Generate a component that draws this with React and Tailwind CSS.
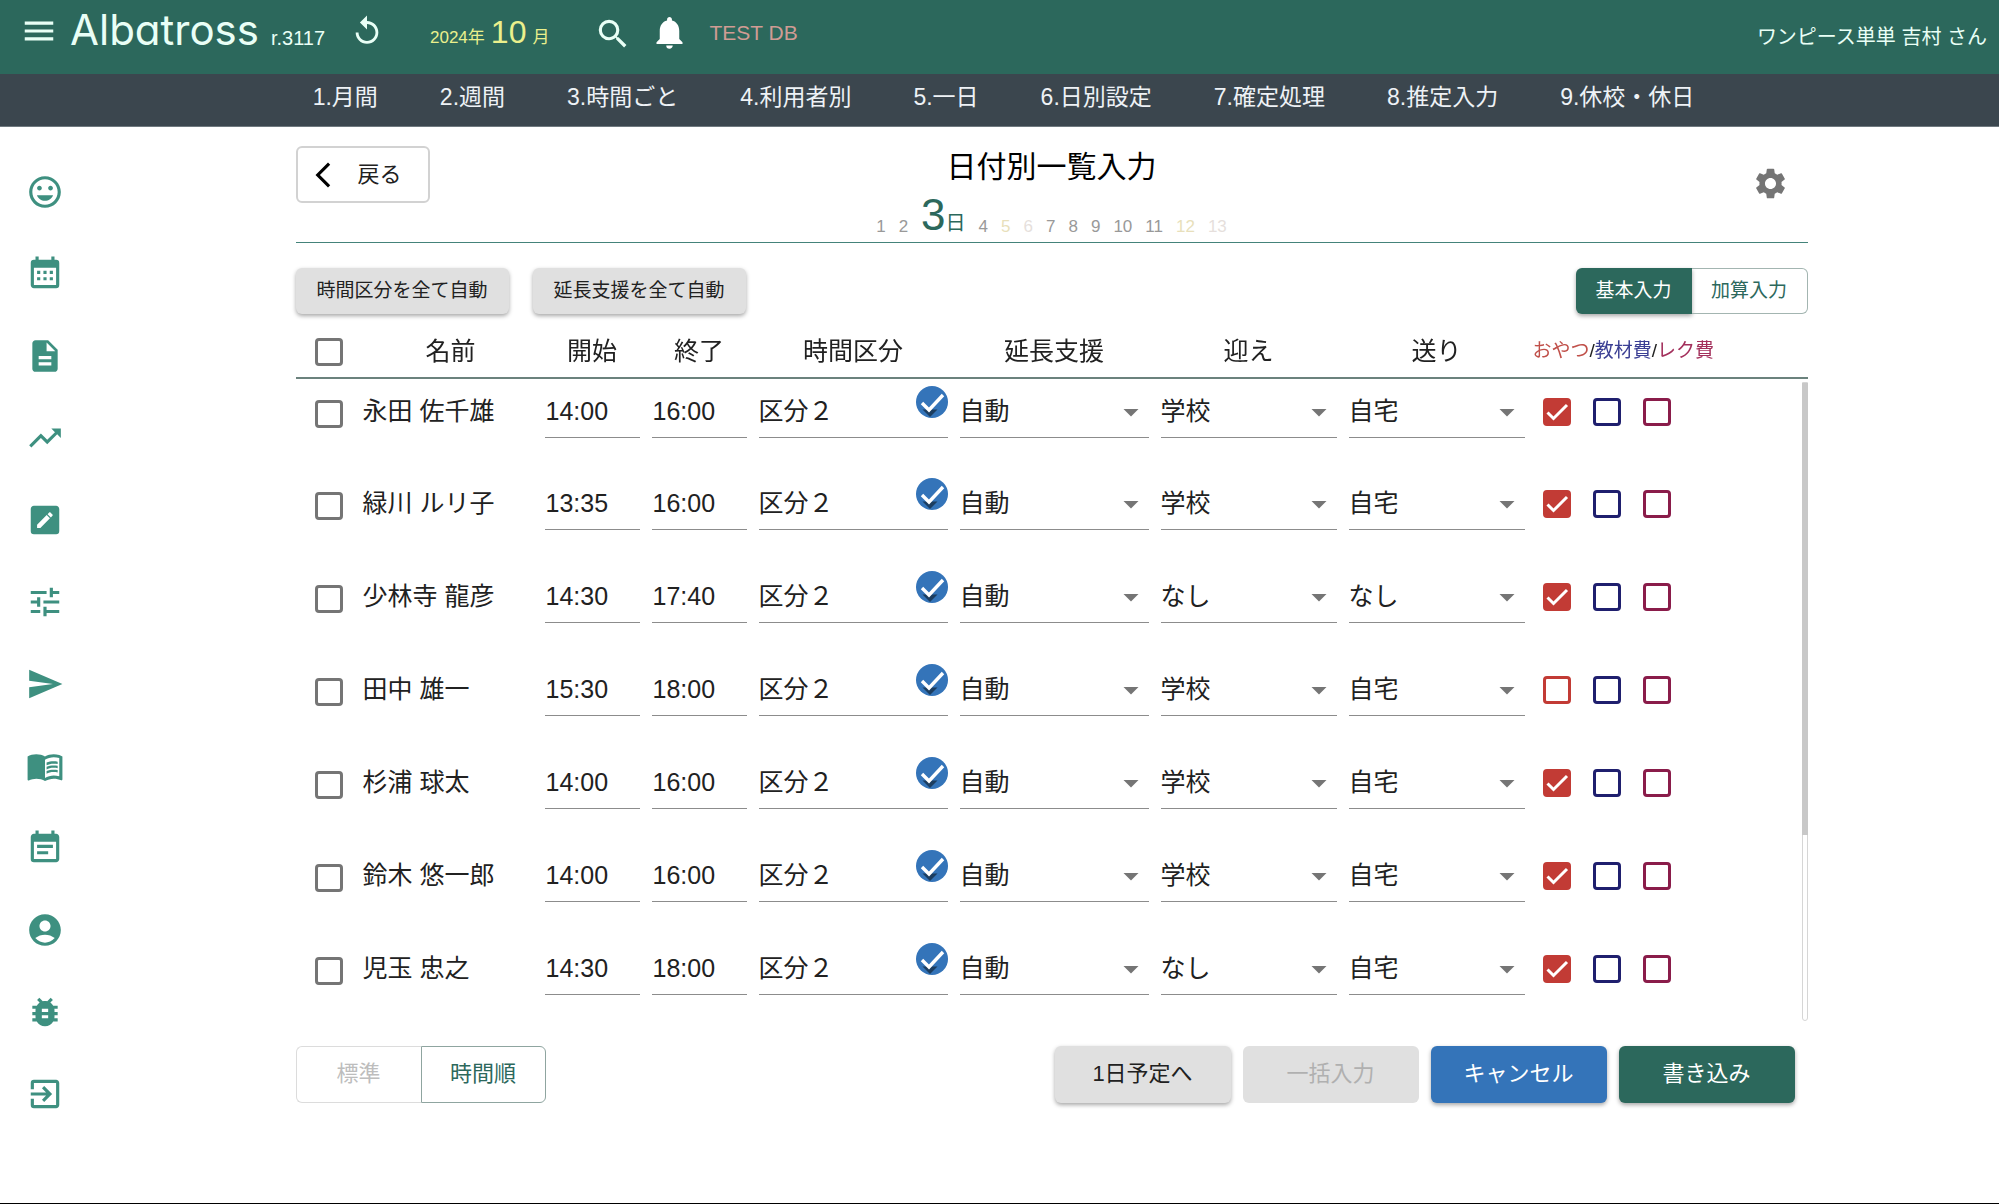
import { useState } from "react";
import {
  MdMenu, MdReplay, MdSearch, MdNotifications, MdMood, MdDescription, MdTrendingUp, MdTune, MdSend,
  MdMenuBook, MdEventNote, MdAccountCircle, MdBugReport, MdExitToApp, MdSettings, MdArrowBackIosNew,
  MdArrowDropDown,
} from "react-icons/md";

const CalendarMonth = ({ size }) => (
  <svg width={size} height={size} viewBox="0 0 24 24" fill="currentColor">
    <path d="M9 10v2H7v-2h2m4 0v2h-2v-2h2m4 0v2h-2v-2h2m2-7a2 2 0 0 1 2 2v14a2 2 0 0 1-2 2H5c-1.11 0-2-.9-2-2V5a2 2 0 0 1 2-2h1V1h2v2h8V1h2v2h1m0 16V8H5v11h14M9 14v2H7v-2h2m4 0v2h-2v-2h2m4 0v2h-2v-2h2z" />
  </svg>
);

const PencilBox = ({ size }) => (
  <svg width={size} height={size} viewBox="0 0 24 24" fill="currentColor">
    <path d="M19 3H5c-1.11 0-2 .89-2 2v14a2 2 0 0 0 2 2h14a2 2 0 0 0 2-2V5c0-1.11-.9-2-2-2m-2.3 6.35-1 1-2.05-2.05 1-1c.21-.22.56-.22.77 0l1.28 1.28c.22.21.22.56 0 .77M7 14.94l6.06-6.06 2.06 2.06L9.06 17H7v-2.06z" />
  </svg>
);

const menus = ["1.月間", "2.週間", "3.時間ごと", "4.利用者別", "5.一日", "6.日別設定", "7.確定処理", "8.推定入力", "9.休校・休日"];

const sideLinks = [
  ["利用者", MdMood],
  ["カレンダー", CalendarMonth],
  ["帳票", MdDescription],
  ["推移", MdTrendingUp],
  ["編集", PencilBox],
  ["設定", MdTune],
  ["送信", MdSend],
  ["マニュアル", MdMenuBook],
  ["予定", MdEventNote],
  ["アカウント", MdAccountCircle],
  ["不具合報告", MdBugReport],
  ["ログアウト", MdExitToApp],
];

const rows = [
  { name: "永田 佐千雄", start: "14:00", end: "16:00", pickup: "学校", dropoff: "自宅", snack: true },
  { name: "緑川 ルリ子", start: "13:35", end: "16:00", pickup: "学校", dropoff: "自宅", snack: true },
  { name: "少林寺 龍彦", start: "14:30", end: "17:40", pickup: "なし", dropoff: "なし", snack: true },
  { name: "田中 雄一", start: "15:30", end: "18:00", pickup: "学校", dropoff: "自宅", snack: false },
  { name: "杉浦 球太", start: "14:00", end: "16:00", pickup: "学校", dropoff: "自宅", snack: true },
  { name: "鈴木 悠一郎", start: "14:00", end: "16:00", pickup: "学校", dropoff: "自宅", snack: true },
  { name: "児玉 忠之", start: "14:30", end: "18:00", pickup: "なし", dropoff: "自宅", snack: true },
];

const days = [1, 2, 3, 4, 5, 6, 7, 8, 9, 10, 11, 12, 13];

function dayColor(d) {
  if (d % 7 === 5) return "text-[#e8dfbb]";
  if (d % 7 === 6) return "text-[#e6dfdc]";
  return "text-[#999999]";
}

function Check({ label, color, checked = false }) {
  return (
    <span className="relative block size-7">
      <input type="checkbox" aria-label={label} defaultChecked={checked}
        className={"peer block size-7 appearance-none rounded-[4px] border-3 checked:bg-current " + color} />
      <svg viewBox="0 0 28 28" className="pointer-events-none absolute inset-0 hidden peer-checked:block" fill="none" stroke="#fff" strokeWidth="3">
        <path d="M4.5 14.5 10.5 20.5 24 7" />
      </svg>
    </span>
  );
}

function TimeInput({ label, value }) {
  const [time, setTime] = useState(value);
  return (
    <input type="text" aria-label={label} value={time} onChange={e => setTime(e.target.value)}
      className="block h-[52px] w-full border-b border-[#8c8c8c] pl-px" />
  );
}

function Select({ label, value, options, done }) {
  return (
    <div className="relative">
      <select aria-label={label} defaultValue={value} className="block h-[52px] w-full appearance-none border-b border-[#8c8c8c]">
        {options.map(o => <option key={o}>{o}</option>)}
      </select>
      <MdArrowDropDown size={36} className="pointer-events-none absolute top-2 right-0 text-[#757575]" />
      {done && (
        <svg viewBox="0 0 32 32" className="pointer-events-none absolute top-0 right-0 size-8">
          <circle cx="16" cy="16" r="16" fill="#3474b9" />
          <path d="M6.5 23.5h15L14 31z" fill="#1b3d60" />
          <path d="M6 17 13 24 27 9" fill="none" stroke="#fff" strokeWidth="3.4" />
        </svg>
      )}
    </div>
  );
}

export default function App() {
  return (
    <div className="flex min-h-screen flex-col border-b border-black bg-white font-['Liberation_Sans','Noto_Sans_CJK_JP',sans-serif] text-[25px] text-[#212121]">
      <header className="flex h-[74px] items-start bg-[#2c685c] pl-5 pr-3 text-[#e9fff6]">
        <button aria-label="メニュー" className="mt-3"><MdMenu size={38} /></button>
        <div className="ml-3 flex w-[280px] items-baseline gap-3">
          <span className="font-[Inter] text-[42px] leading-[60px] [font-feature-settings:'cv11']">Albatross</span>
          <span className="text-[20px]">r.3117</span>
        </div>
        <button aria-label="再読み込み" className="mt-[14px]"><MdReplay size={34} /></button>
        <div className="ml-[46px] flex items-baseline gap-[6px] text-[17px] text-[#eaf08c]">
          <span>2024年</span>
          <span className="text-[32px] leading-[64px]">10</span>
          <span>月</span>
        </div>
        <button aria-label="検索" className="ml-[45px] mt-[15px]"><MdSearch size={38} /></button>
        <button aria-label="お知らせ" className="ml-[18px] mt-[13px] text-white"><MdNotifications size={39} /></button>
        <span className="ml-5 text-[21px] leading-[66px] text-[#d09c94]">TEST DB</span>
        <span className="ml-auto text-[20px] leading-[74px]">ワンピース単単 吉村 さん</span>
      </header>

      <nav className="flex h-[53px] items-center justify-center gap-[62px] border-b border-[#6f797f] bg-[#3b464e] pb-[6px] pl-2 text-[23px] leading-8 text-[#eef2f6]">
        {menus.map(m => <a key={m} href="#">{m}</a>)}
      </nav>

      <div className="flex flex-1">
        <aside className="flex w-[104px] flex-col gap-11 pl-[26px] pt-[46px] text-[#3e9080]">
          {sideLinks.map(([label, Icon]) => (
            <a key={label} href="#" aria-label={label} className="h-[38px]"><Icon size={38} /></a>
          ))}
        </aside>

        <main className="min-w-0 flex-1">
          <div className="mx-auto w-full max-w-[1512px]">
            <div className="grid h-[116px] grid-cols-[1fr_auto_1fr] items-start border-b border-[#44837a]">
              <button className="mt-[19px] flex h-[57px] w-[134px] items-center rounded-md border-2 border-[#d2d2d2] pl-[10px] text-[22px]">
                <MdArrowBackIosNew size={30} className="mr-5 text-black" />戻る
              </button>
              <div className="pt-[22px]">
                <h1 className="text-center text-[30px] leading-9 text-black">日付別一覧入力</h1>
                <div className="mt-2 flex items-end justify-center gap-[13px] text-[17px] leading-5">
                  {days.map(d => d === 3 ? (
                    <button key={d} className="flex items-baseline text-[#2c685c]">
                      <span className="text-[44px] leading-[44px]">3</span>
                      <span className="text-[20px]">日</span>
                    </button>
                  ) : (
                    <button key={d} className={dayColor(d)}>{d}</button>
                  ))}
                </div>
              </div>
              <button aria-label="設定" className="mr-[19px] mt-[38px] justify-self-end text-[#757575]"><MdSettings size={37} /></button>
            </div>

            <div className="mt-[25px] flex h-[46px] text-[19px]">
              <button className="w-[213px] rounded-md bg-[#e0e0e0] shadow-[0_2px_4px_rgba(0,0,0,0.35)]">時間区分を全て自動</button>
              <button className="ml-6 w-[213px] rounded-md bg-[#e0e0e0] shadow-[0_2px_4px_rgba(0,0,0,0.35)]">延長支援を全て自動</button>
              <button className="ml-auto w-[116px] rounded-l-md bg-[#2c685c] text-white shadow-[0_2px_4px_rgba(0,0,0,0.35)]">基本入力</button>
              <button className="w-[116px] rounded-r-md border border-l-0 border-[#a3b5b1] text-[#2c685c]">加算入力</button>
            </div>

            <div className="relative mt-3">
              <div className="max-h-[695px] overflow-y-auto [scrollbar-width:none]">
                <table className="w-full table-fixed">
                  <colgroup>
                    <col className="w-[61px]" />
                    <col className="w-[182px]" />
                    <col className="w-[107px]" />
                    <col className="w-[107px]" />
                    <col className="w-[201px]" />
                    <col className="w-[201px]" />
                    <col className="w-[188px]" />
                    <col className="w-[188px]" />
                    <col />
                  </colgroup>
                  <thead className="sticky top-0 z-10 bg-white">
                    <tr className="h-[52px] border-b-2 border-[#6b827d] *:font-normal">
                      <th className="pl-[19px]"><Check label="すべて選択" color="border-[#757575] text-[#757575]" /></th>
                      <th className="pl-[6px]">名前</th>
                      <th>開始</th>
                      <th>終了</th>
                      <th>時間区分</th>
                      <th>延長支援</th>
                      <th>迎え</th>
                      <th>送り</th>
                      <th className="pl-[2px] text-left text-[19px]">
                        <span className="text-[#c0504a]">おやつ</span>/<span className="text-[#3b3f94]">教材費</span>/<span className="text-[#a3305c]">レク費</span>
                      </th>
                    </tr>
                  </thead>
                  <tbody>
                    {rows.map(r => (
                      <tr key={r.name} className="h-[93px] align-top *:px-[6px] *:pt-[7px]">
                        <td><div className="flex h-[55px] items-center pl-[13px]"><Check label={r.name + " 選択"} color="border-[#757575] text-[#757575]" /></div></td>
                        <td className="whitespace-nowrap leading-[50px]">{r.name}</td>
                        <td><TimeInput label={r.name + " 開始"} value={r.start} /></td>
                        <td><TimeInput label={r.name + " 終了"} value={r.end} /></td>
                        <td><Select label={r.name + " 時間区分"} value="区分２" options={["区分１", "区分２", "区分３"]} done /></td>
                        <td><Select label={r.name + " 延長支援"} value="自動" options={["自動", "なし"]} /></td>
                        <td><Select label={r.name + " 迎え"} value={r.pickup} options={["学校", "自宅", "なし"]} /></td>
                        <td><Select label={r.name + " 送り"} value={r.dropoff} options={["学校", "自宅", "なし"]} /></td>
                        <td>
                          <div className="flex h-[52px] items-center gap-[22px] pl-[6px]">
                            <Check label={r.name + " おやつ"} color="border-[#c23b35] text-[#c23b35]" checked={r.snack} />
                            <Check label={r.name + " 教材費"} color="border-[#1f1f6e] text-[#1f1f6e]" />
                            <Check label={r.name + " レク費"} color="border-[#8a1c4a] text-[#8a1c4a]" />
                          </div>
                        </td>
                      </tr>
                    ))}
                  </tbody>
                </table>
              </div>
              {/* scroll indicator */}
              <div className="absolute bottom-0 right-0 top-14 w-[6px] rounded-b border border-[#d6d6d6] bg-white">
                <div className="-mx-px h-[71%] bg-[#c8c8c8]" />
              </div>
            </div>

            <div className="mt-[25px] flex h-[57px] gap-3 pr-[13px] text-[22px]">
              <div className="mr-auto flex">
                <button disabled className="w-[125px] rounded-l-md border border-r-0 border-[#dcdcdc] pb-[2px] text-[#bdbdbd]">標準</button>
                <button className="w-[125px] rounded-r-md border border-[#8fa5a0] pb-[2px] text-[#2c685c]">時間順</button>
              </div>
              <button className="w-[176px] rounded-md bg-[#e0e0e0] pb-[2px] shadow-[0_2px_4px_rgba(0,0,0,0.35)]">1日予定へ</button>
              <button disabled className="w-[176px] rounded-md bg-[#e0e0e0] pb-[2px] text-[#b0b0b0]">一括入力</button>
              <button className="w-[176px] rounded-md bg-[#3474b9] pb-[2px] text-white shadow-[0_2px_4px_rgba(0,0,0,0.35)]">キャンセル</button>
              <button className="w-[176px] rounded-md bg-[#2c685c] pb-[2px] text-white shadow-[0_2px_4px_rgba(0,0,0,0.35)]">書き込み</button>
            </div>
          </div>
        </main>
      </div>
    </div>
  );
}
